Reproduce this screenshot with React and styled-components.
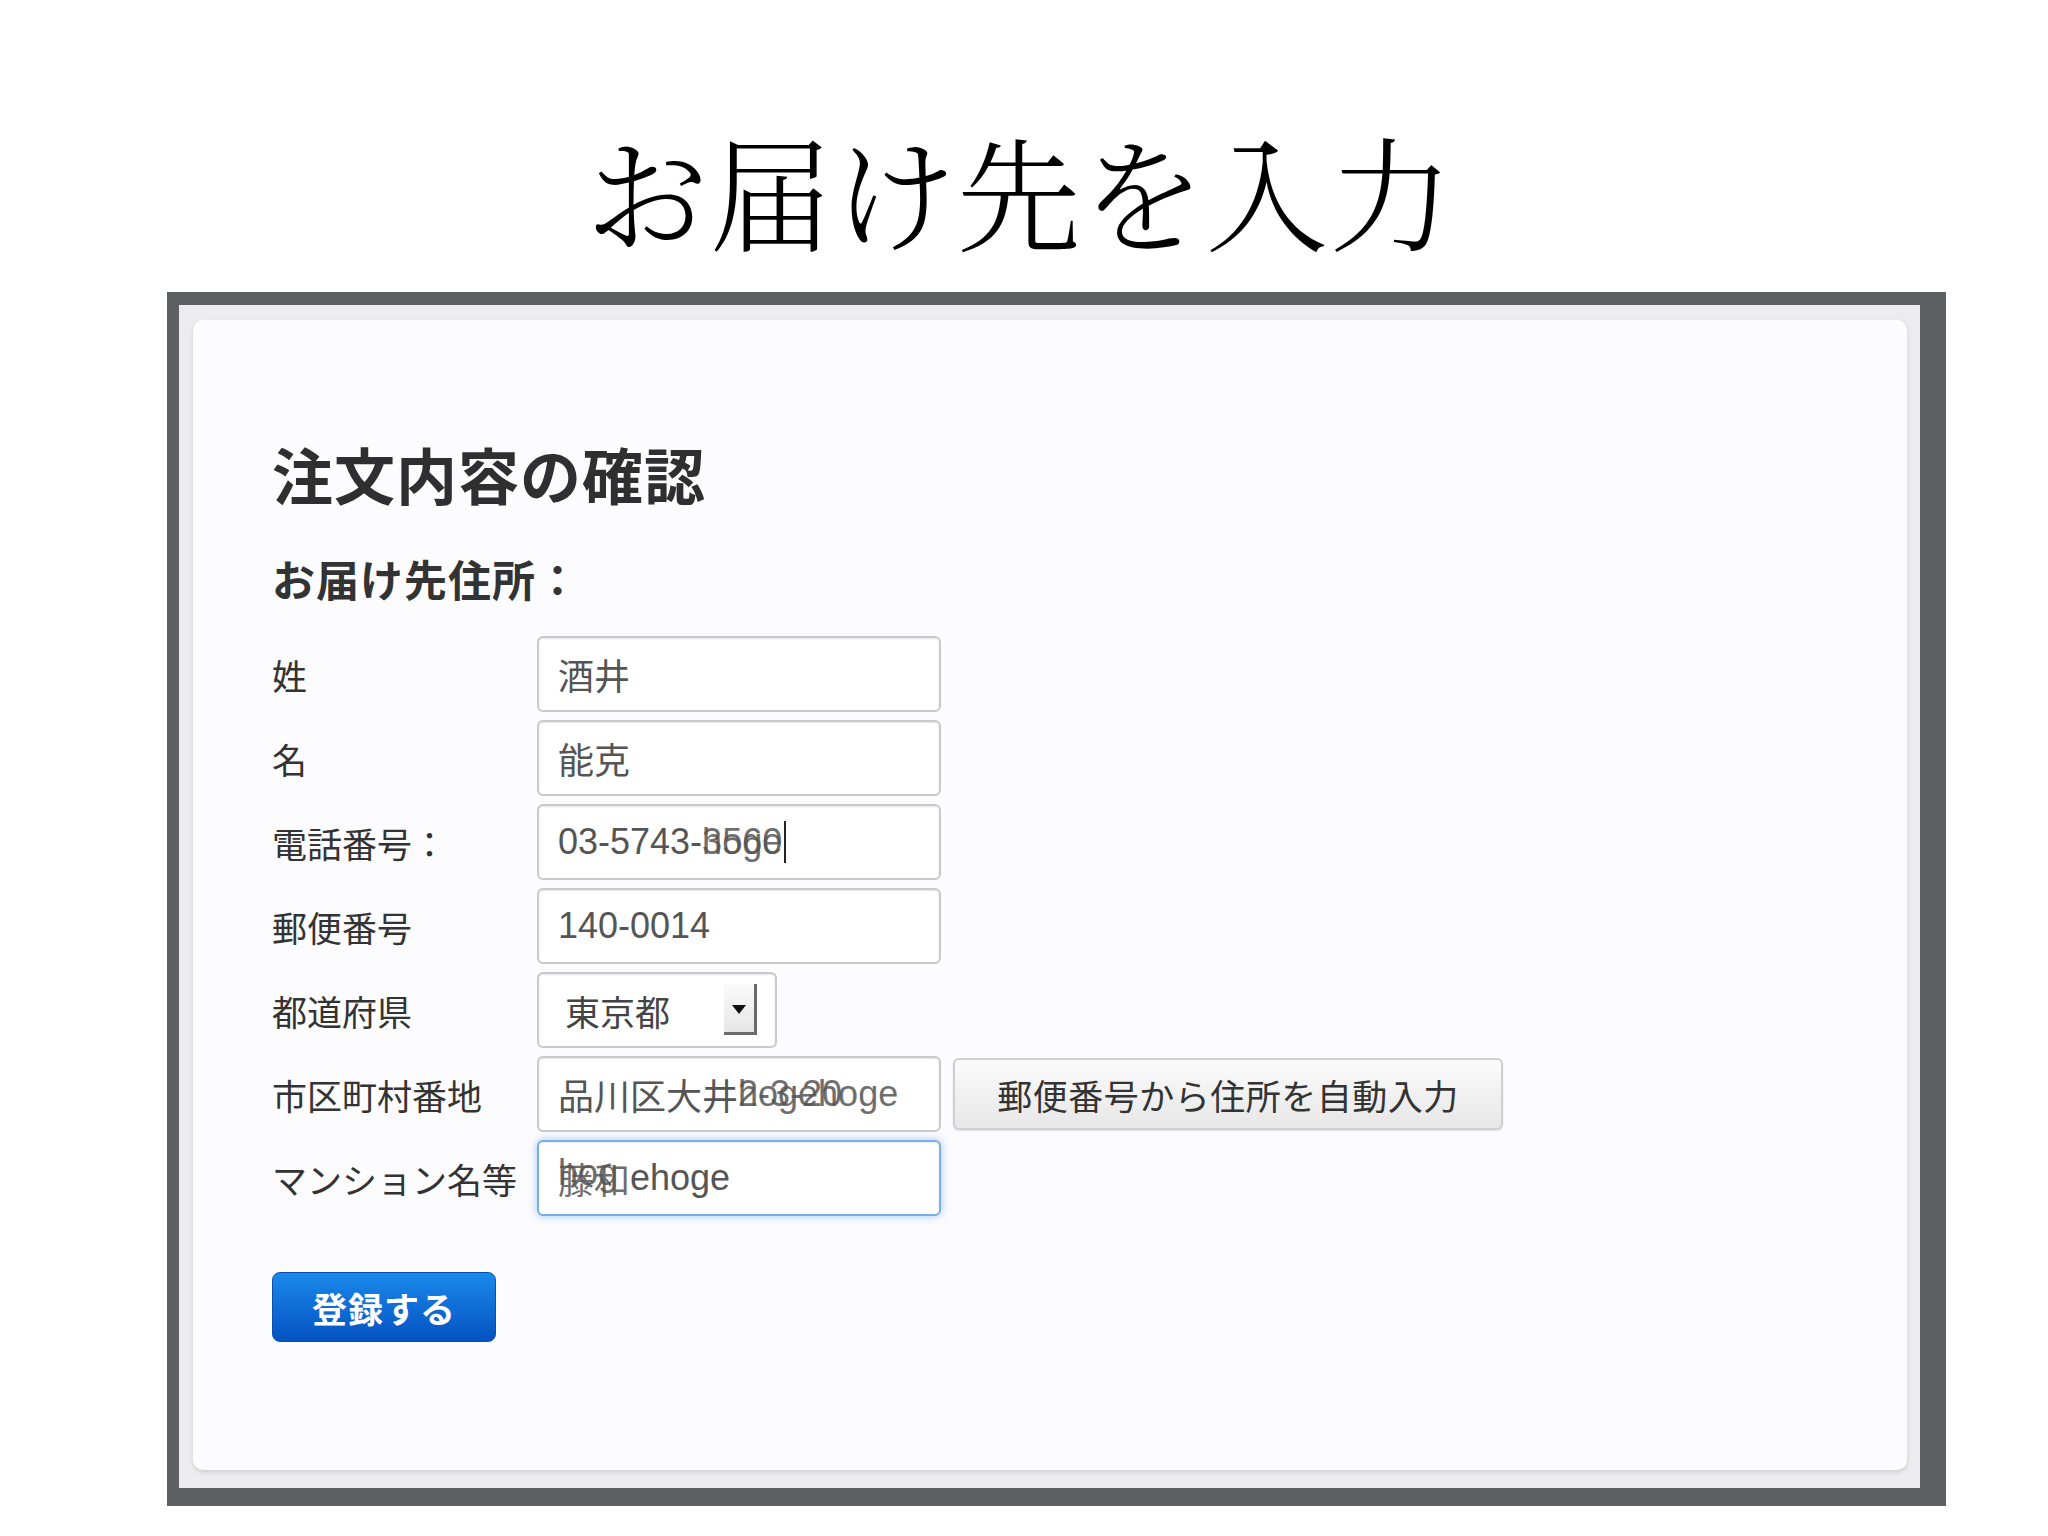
import React from "react";
import styled, { createGlobalStyle } from "styled-components";

const GlobalStyle = createGlobalStyle`
  body {
    margin: 0;
    background: #ffffff;
    font-family: "Liberation Sans", "Noto Sans CJK JP", sans-serif;
  }
`;

const Page = styled.div`
  width: 2048px;
  height: 1536px;
  padding-top: 126px;
  box-sizing: border-box;
`;

const SlideTitle = styled.h1`
  margin: 0 0 41px;
  text-align: center;
  font-family: "Noto Serif CJK JP", "IPAMincho", "Noto Sans CJK JP", serif;
  font-weight: 300;
  font-size: 124px;
  line-height: 125px;
  color: #000;
  padding-right: 10px;
`;

const Frame = styled.div`
  margin-left: 167px;
  width: 1779px;
  box-sizing: border-box;
  background: #ececee;
  border-style: solid;
  border-color: #5e5f63;
  border-width: 13px 26px 18px 12px;
  padding: 15px 13px 18px 14px;
`;

const Card = styled.div`
  height: 1150px;
  box-sizing: border-box;
  background: #fcfbfd;
  border-radius: 10px;
  box-shadow: 0 2px 4px rgba(0, 0, 0, 0.13);
  padding: 123px 0 0 79px;
`;

const Heading = styled.h2`
  margin: 0;
  font-family: "Noto Sans CJK JP", sans-serif;
  font-weight: 700;
  font-size: 61px;
  line-height: 62px;
  color: #2f2f2f;
  letter-spacing: 1px;
`;

const SubHeading = styled.h3`
  margin: 51px 0 0;
  font-family: "Noto Sans CJK JP", sans-serif;
  font-weight: 700;
  font-size: 43px;
  line-height: 44px;
  color: #333;
  letter-spacing: 1px;
`;

const Form = styled.div`
  margin-top: 36px;
  display: flex;
  flex-direction: column;
  gap: 8px;
`;

const Row = styled.div`
  display: flex;
  align-items: center;
  gap: 12px;
`;

const Label = styled.div`
  width: 253px;
  font-family: "Noto Sans CJK JP", sans-serif;
  font-size: 35px;
  color: #333;
  white-space: nowrap;
`;

const Field = styled.div`
  width: ${(p) => p.$width || 404}px;
  height: 76px;
  box-sizing: border-box;
  display: flex;
  align-items: center;
  padding-left: ${(p) => p.$pad || 19}px;
  padding-right: 18px;
  background: #fff;
  border: 2px solid ${(p) => (p.$focus ? "#79aee6" : "#c9c9c9")};
  border-radius: 6px;
  box-shadow: ${(p) =>
    p.$focus
      ? "0 0 9px rgba(82, 160, 236, 0.55), inset 0 1px 2px rgba(0,0,0,0.08)"
      : "inset 0 1px 2px rgba(0, 0, 0, 0.1)"};
  font-size: 36px;
  color: #555;
  white-space: nowrap;
  overflow: hidden;
`;

const Stack = styled.span`
  display: inline-grid;
  & > span {
    grid-area: 1 / 1;
    color: #555;
    opacity: 0.85;
  }
`;

const Caret = styled.span`
  display: inline-block;
  width: 2px;
  height: 42px;
  margin-left: 2px;
  background: #222;
`;

const SelectText = styled.span`
  flex: 1;
  font-family: "Noto Sans CJK JP", sans-serif;
  font-size: 35px;
  color: #444;
`;

const ArrowBox = styled.span`
  width: 30px;
  height: 48px;
  margin-bottom: 2px;
  display: flex;
  align-items: center;
  justify-content: center;
  background: linear-gradient(#fbfbfb, #e6e6e6);
  border-right: 3px solid #6a6a6a;
  border-bottom: 3px solid #6a6a6a;
  &::after {
    content: "";
    margin-top: 4px;
    border-left: 7px solid transparent;
    border-right: 7px solid transparent;
    border-top: 9px solid #111;
  }
`;

const GrayButton = styled.button`
  width: 550px;
  height: 72px;
  font-family: "Noto Sans CJK JP", sans-serif;
  font-size: 35px;
  color: #333;
  background: linear-gradient(#fbfbfb, #e7e7e7);
  border: 2px solid #cfcfcf;
  border-radius: 6px;
  box-shadow: 0 1px 2px rgba(0, 0, 0, 0.12);
  letter-spacing: 0.5px;
`;

const Submit = styled.button`
  margin-top: 56px;
  width: 224px;
  height: 70px;
  font-family: "Noto Sans CJK JP", sans-serif;
  font-weight: 700;
  font-size: 35px;
  color: #fff;
  background: linear-gradient(#1a89ea, #0552c2);
  border: 1px solid #0a4fb0;
  border-radius: 8px;
  letter-spacing: 1px;
`;

function Ghost({ layers }) {
  return (
    <Stack>
      {layers.map((t) => (
        <span key={t}>{t}</span>
      ))}
    </Stack>
  );
}

export default function App() {
  return (
    <Page>
      <GlobalStyle />
      <SlideTitle>お届け先を入力</SlideTitle>
      <Frame>
        <Card>
          <Heading>注文内容の確認</Heading>
          <SubHeading>お届け先住所：</SubHeading>
          <Form>
            <Row>
              <Label>姓</Label>
              <Field>酒井</Field>
            </Row>
            <Row>
              <Label>名</Label>
              <Field>能克</Field>
            </Row>
            <Row>
              <Label>電話番号：</Label>
              <Field>
                03-5743-
                <Ghost layers={["3560", "hoge"]} />
                <Caret />
              </Field>
            </Row>
            <Row>
              <Label>郵便番号</Label>
              <Field>140-0014</Field>
            </Row>
            <Row>
              <Label>都道府県</Label>
              <Field $width={240} $pad={26}>
                <SelectText>東京都</SelectText>
                <ArrowBox />
              </Field>
            </Row>
            <Row>
              <Label>市区町村番地</Label>
              <Field>
                品川区大井
                <Ghost layers={["2-3-20", "hogehoge"]} />
              </Field>
              <GrayButton>郵便番号から住所を自動入力</GrayButton>
            </Row>
            <Row>
              <Label>マンション名等</Label>
              <Field $focus>
                <Ghost layers={["藤和", "hog"]} />
                ehoge
              </Field>
            </Row>
          </Form>
          <Submit>登録する</Submit>
        </Card>
      </Frame>
    </Page>
  );
}
